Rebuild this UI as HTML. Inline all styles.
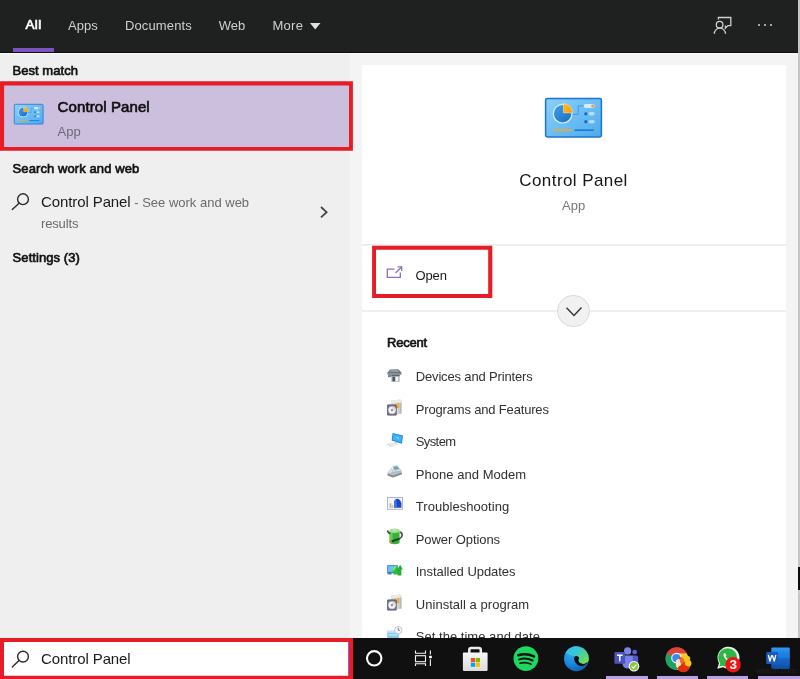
<!DOCTYPE html>
<html><head><meta charset="utf-8"><title>Search</title>
<style>
html,body{margin:0;padding:0;}
body{width:800px;height:679px;position:relative;overflow:hidden;background:#f4f4f4;font-family:"Liberation Sans",sans-serif;}
.a{position:absolute;}
.t{position:absolute;line-height:20px;white-space:pre;}
#w{position:absolute;left:0;top:0;width:800px;height:679px;will-change:transform;}
svg{position:absolute;overflow:visible;}
</style></head><body><div id="w">
<div class="a" style="left:0;top:52px;width:349.6px;height:587px;background:#efefef"></div>
<div class="a" style="left:362px;top:65px;width:424px;height:574px;background:#ffffff"></div>
<div class="a" style="left:797.5px;top:0;width:2.5px;height:639px;background:#c6c6c6"></div>
<div class="a" style="left:797.5px;top:567px;width:2.5px;height:23px;background:#0c0c0c"></div>
<div class="a" style="left:797.5px;top:590px;width:2.5px;height:4px;background:#c8c8e0"></div>
<div class="a" style="left:0;top:0;width:797.5px;height:52.7px;background:#1f2020"></div>
<div class="a" style="left:0;top:51.7px;width:797.5px;height:1px;background:#0e0e0e"></div>
<div class="a" style="left:0;top:52.7px;width:797.5px;height:1.3px;background:#fbfbfb"></div>
<div class="a" style="left:13px;top:48px;width:41.2px;height:4px;background:#7b53c1"></div>
<div class="a" style="left:362px;top:244px;width:424px;height:1.5px;background:#eeeeee"></div>
<div class="a" style="left:362px;top:310px;width:424px;height:1.6px;background:#efefef"></div>
<div class="t" style="left:25.50px;top:15.32px;font-size:13.5px;font-weight:normal;-webkit-text-stroke:0.65px #ffffff;color:#ffffff;letter-spacing:0.35px;">All</div>
<div class="t" style="left:68.00px;top:15.50px;font-size:13px;font-weight:normal;color:#cfcfcf;">Apps</div>
<div class="t" style="left:125.00px;top:15.50px;font-size:13px;font-weight:normal;color:#cfcfcf;letter-spacing:0.12px;">Documents</div>
<div class="t" style="left:218.75px;top:15.50px;font-size:13px;font-weight:normal;color:#cfcfcf;">Web</div>
<div class="t" style="left:272.50px;top:15.50px;font-size:13px;font-weight:normal;color:#cfcfcf;letter-spacing:0.25px;">More</div>
<svg style="left:310px;top:23px" width="11" height="7" viewBox="0 0 11 7"><path d="M0 0H10.5L5.25 6.5Z" fill="#e0e0e0"/></svg>
<svg style="left:712px;top:15px" width="22" height="21" viewBox="712 15 22 21" fill="none" stroke="#d0d0d0" stroke-width="1.3">
<circle cx="719.6" cy="24.7" r="3.3"/>
<path d="M714.3 33.8a5.6 5.6 0 0 1 11.2 0"/>
<path d="M718.4 19.5V17.5H730.8V25.6H728L725.4 28.2V25.6"/>
</svg>
<div class="a" style="left:757.7px;top:24.3px;width:2.2px;height:2.2px;background:#d4d4d4;border-radius:50%"></div>
<div class="a" style="left:764.0px;top:24.3px;width:2.2px;height:2.2px;background:#d4d4d4;border-radius:50%"></div>
<div class="a" style="left:770.3px;top:24.3px;width:2.2px;height:2.2px;background:#d4d4d4;border-radius:50%"></div>
<div class="t" style="left:12.60px;top:60.90px;font-size:13px;font-weight:normal;-webkit-text-stroke:0.65px #111;color:#111;letter-spacing:0.03px;">Best match</div>
<svg style="left:0;top:0" width="800" height="679" viewBox="0 0 800 679"><rect x="3.5999999999999996" y="85.0" width="345.9" height="62.400000000000006" fill="#cbbfdd"/><path fill-rule="evenodd" fill="#e61c26" d="M0 81.3H352.9V150.8H0ZM4.1 85.5V146.9H349V85.5Z"/></svg>
<div class="t" style="left:57.60px;top:96.90px;font-size:15px;font-weight:normal;-webkit-text-stroke:0.65px #101010;color:#101010;letter-spacing:0.1px;">Control Panel</div>
<div class="t" style="left:57.50px;top:121.90px;font-size:13px;font-weight:normal;color:#6c687a;">App</div>
<div class="t" style="left:12.60px;top:158.70px;font-size:13px;font-weight:normal;-webkit-text-stroke:0.65px #111;color:#111;letter-spacing:0.09px;">Search work and web</div>
<svg style="left:10px;top:192px" width="22" height="20" viewBox="10 192 22 20" fill="none" stroke="#2a2a2a" stroke-width="1.4" stroke-linecap="round">
<circle cx="23" cy="199.2" r="5.4"/><path d="M19 203.2L12.3 209.6"/></svg>
<div class="t" style="left:41.00px;top:192.00px;font-size:15px;font-weight:normal;color:#1a1a1a;letter-spacing:-0.1px;">Control Panel<span style="font-size:13px;color:#6b6b6b;letter-spacing:0"> - See work and web</span></div>
<div class="t" style="left:41.00px;top:214.00px;font-size:13px;font-weight:normal;color:#6b6b6b;letter-spacing:-0.15px;">results</div>
<svg style="left:319px;top:205px" width="10" height="14" viewBox="0 0 10 14" fill="none" stroke="#444" stroke-width="1.8"><path d="M2 2L7.6 7.2L2 12.4"/></svg>
<div class="t" style="left:12.60px;top:247.70px;font-size:13px;font-weight:normal;-webkit-text-stroke:0.65px #111;color:#111;letter-spacing:0.07px;">Settings (3)</div>
<div class="t" style="left:519.30px;top:170.61px;font-size:17px;font-weight:normal;color:#151515;letter-spacing:0.42px;">Control Panel</div>
<div class="t" style="left:562.00px;top:196.30px;font-size:13px;font-weight:normal;color:#767676;">App</div>
<svg style="left:0;top:0" width="800" height="679" viewBox="0 0 800 679"><path fill-rule="evenodd" fill="#e61c26" d="M372.1 245.8H492.3V298H372.1ZM376 249.7V293.9H488.2V249.7Z"/></svg>
<svg style="left:385px;top:264px" width="19" height="16" viewBox="385 264 19 16" fill="none" stroke="#8a6fc4" stroke-width="1.3">
<path d="M394.5 269.2H387.3V277.4H400.3V272.5"/><path d="M395.5 273L401.6 267"/><path d="M397.6 266.9H401.7V271"/></svg>
<div class="t" style="left:415.40px;top:265.50px;font-size:13px;font-weight:normal;color:#1a1a1a;letter-spacing:-0.1px;">Open</div>
<div class="a" style="left:557.3px;top:294.9px;width:32.5px;height:32.5px;box-sizing:border-box;border:1px solid #dadada;border-radius:50%;background:#f1f1f1"></div>
<svg style="left:564.8px;top:305.5px" width="18" height="11" viewBox="0 0 18 11" fill="none" stroke="#333" stroke-width="1.4"><path d="M1.5 1.8L9 9.4L16.5 1.6"/></svg>
<div class="t" style="left:387.10px;top:332.70px;font-size:13px;font-weight:normal;-webkit-text-stroke:0.65px #111;color:#111;letter-spacing:-0.25px;">Recent</div>
<div class="t" style="left:415.75px;top:367.35px;font-size:13px;font-weight:normal;color:#303030;letter-spacing:-0.16px;">Devices and Printers</div>
<div class="t" style="left:415.75px;top:399.85px;font-size:13px;font-weight:normal;color:#303030;letter-spacing:-0.17px;">Programs and Features</div>
<div class="t" style="left:415.75px;top:432.35px;font-size:13px;font-weight:normal;color:#303030;letter-spacing:-0.6px;">System</div>
<div class="t" style="left:415.75px;top:464.85px;font-size:13px;font-weight:normal;color:#303030;letter-spacing:0.04px;">Phone and Modem</div>
<div class="t" style="left:415.75px;top:497.35px;font-size:13px;font-weight:normal;color:#303030;letter-spacing:0.05px;">Troubleshooting</div>
<div class="t" style="left:415.75px;top:529.85px;font-size:13px;font-weight:normal;color:#303030;letter-spacing:-0.08px;">Power Options</div>
<div class="t" style="left:415.75px;top:562.35px;font-size:13px;font-weight:normal;color:#303030;letter-spacing:-0.04px;">Installed Updates</div>
<div class="t" style="left:415.75px;top:594.85px;font-size:13px;font-weight:normal;color:#303030;letter-spacing:0.04px;">Uninstall a program</div>
<div class="t" style="left:415.75px;top:627.35px;font-size:13px;font-weight:normal;color:#303030;letter-spacing:0.03px;">Set the time and date</div>
<svg width="0" height="0" style="position:absolute"><defs>
<linearGradient id="cpbg" x1="0" y1="0" x2="1" y2="1"><stop offset="0" stop-color="#8bd0fa"/><stop offset="1" stop-color="#4eabed"/></linearGradient>
<linearGradient id="cppie" x1="0" y1="0" x2="1" y2="1"><stop offset="0" stop-color="#3fa0e6"/><stop offset="1" stop-color="#1a6cc4"/></linearGradient>
<linearGradient id="cpor" x1="0" y1="0" x2="1" y2="1"><stop offset="0" stop-color="#ffc61a"/><stop offset="1" stop-color="#f7941d"/></linearGradient>
<radialGradient id="edg1" cx="0.3" cy="0.25" r="0.95"><stop offset="0" stop-color="#2fb0ee"/><stop offset="0.5" stop-color="#1a86dc"/><stop offset="1" stop-color="#0a4f9e"/></radialGradient>
<linearGradient id="edg2" x1="0" y1="0" x2="1" y2="0.7"><stop offset="0" stop-color="#35c0f2"/><stop offset="0.45" stop-color="#36c6d8"/><stop offset="0.8" stop-color="#56d87a"/><stop offset="1" stop-color="#74e052"/></linearGradient>
<linearGradient id="bag" x1="0" y1="0" x2="0" y2="1"><stop offset="0" stop-color="#f6f6f6"/><stop offset="1" stop-color="#dcdcdc"/></linearGradient>
<linearGradient id="wd" x1="0" y1="0" x2="0" y2="1"><stop offset="0" stop-color="#2b9af3"/><stop offset="0.5" stop-color="#1a6fd0"/><stop offset="1" stop-color="#0e4aa0"/></linearGradient>
</defs></svg>
<svg style="left:545.1px;top:98.3px" width="57" height="39.5" viewBox="0 0 57 39.5" preserveAspectRatio="none"><rect x="0.6" y="0.6" width="55.8" height="38.3" rx="1.6" fill="url(#cpbg)" stroke="#1b74cf" stroke-width="1.5"/>
<circle cx="17.6" cy="15.7" r="9.9" fill="#d9effd"/>
<circle cx="17.6" cy="15.7" r="8.7" fill="url(#cppie)"/>
<path d="M18.4 14.9V5.6A9.3 9.3 0 0 1 27.7 14.9Z" fill="url(#cpor)" stroke="#ffe9a8" stroke-width="0.5"/>
<path d="M27.6 16.4H33.2V7.9H38.7" fill="none" stroke="#2e86d8" stroke-width="0.7"/>
<rect x="38.7" y="5.9" width="11" height="4.1" rx="2.05" fill="#d4ecfc"/>
<circle cx="47.6" cy="7.95" r="1.5" fill="#f59a23"/>
<rect x="43.5" y="14" width="6.2" height="3.6" rx="1.8" fill="#b4def9"/>
<circle cx="40.8" cy="15.8" r="1.6" fill="#1768c2"/>
<rect x="43.5" y="21.9" width="6.2" height="3.6" rx="1.8" fill="#b4def9"/>
<circle cx="40.8" cy="23.7" r="1.6" fill="#1768c2"/>
<rect x="8.2" y="31.4" width="18.6" height="1.6" fill="#f7a823"/>
<rect x="29.6" y="31.4" width="19.2" height="1.6" fill="#1b78d3"/>
</svg>
<svg style="left:13.7px;top:103.6px;filter:blur(0.3px)" width="29.4" height="20.4" viewBox="0 0 57 39.5" preserveAspectRatio="none"><rect x="0.6" y="0.6" width="55.8" height="38.3" rx="1.6" fill="url(#cpbg)" stroke="#1b74cf" stroke-width="1.5"/>
<circle cx="17.6" cy="15.7" r="9.9" fill="#d9effd"/>
<circle cx="17.6" cy="15.7" r="8.7" fill="url(#cppie)"/>
<path d="M18.4 14.9V5.6A9.3 9.3 0 0 1 27.7 14.9Z" fill="url(#cpor)" stroke="#ffe9a8" stroke-width="0.5"/>
<path d="M27.6 16.4H33.2V7.9H38.7" fill="none" stroke="#2e86d8" stroke-width="0.7"/>
<rect x="38.7" y="5.9" width="11" height="4.1" rx="2.05" fill="#d4ecfc"/>
<circle cx="47.6" cy="7.95" r="1.5" fill="#f59a23"/>
<rect x="43.5" y="14" width="6.2" height="3.6" rx="1.8" fill="#b4def9"/>
<circle cx="40.8" cy="15.8" r="1.6" fill="#1768c2"/>
<rect x="43.5" y="21.9" width="6.2" height="3.6" rx="1.8" fill="#b4def9"/>
<circle cx="40.8" cy="23.7" r="1.6" fill="#1768c2"/>
<rect x="8.2" y="31.4" width="18.6" height="1.6" fill="#f7a823"/>
<rect x="29.6" y="31.4" width="19.2" height="1.6" fill="#1b78d3"/>
</svg>
<svg style="left:387.2px;top:368.9px;filter:blur(0.5px);" width="15" height="13" viewBox="0 0 15 13">
<path d="M3.2 0.6L11 0.3L14.3 3.2V5.6H0.6V3.4Z" fill="#68747c"/><path d="M4.2 1.3L10.3 1L12.3 2.8H2.6Z" fill="#9da8ae"/>
<rect x="0.6" y="4" width="13.7" height="1.7" fill="#87939a"/>
<rect x="1" y="5.6" width="3.4" height="2.6" fill="#7a868d"/>
<rect x="4.4" y="5.6" width="8.2" height="7.2" fill="#a9b3b9"/><rect x="4.4" y="5.6" width="8.2" height="1.5" fill="#5c676e"/>
<rect x="5.6" y="7.8" width="2.2" height="4.4" fill="#444e55"/><rect x="8.6" y="7.8" width="2.6" height="4.4" fill="#f2f4f5"/></svg>
<svg style="left:387.2px;top:398.6px;filter:blur(0.5px);" width="15" height="17" viewBox="0 0 15 17">
<path d="M4 1.6L13.3 0.4L14.5 1.4V14.6L9 15.8L4 14Z" fill="#d5d5d6"/><path d="M4 1.6L13.3 0.4L14.5 1.4V3.6L4 4.6Z" fill="#e9e9e6"/>
<path d="M8.6 4.4L12.2 4V9L8.6 9.6Z" fill="#e9a93a"/><path d="M8.6 4.4L10.4 4.2V6.4L8.6 6.8Z" fill="#f3d262"/>
<path d="M12.6 3.8L14.5 3.4V14.6L12.6 15Z" fill="#b9b9bd"/>
<rect x="0.2" y="5.6" width="9.4" height="10.8" rx="1" fill="#4e4a66"/><rect x="1.3" y="6.5" width="7.4" height="9" fill="#8f8ca3"/>
<circle cx="5" cy="11.1" r="3.7" fill="#f3f3f5"/><circle cx="5" cy="11.1" r="1.2" fill="#8a879c"/><path d="M5 7.4A3.7 3.7 0 0 1 8.7 11.1H6.2A1.2 1.2 0 0 0 5 9.9Z" fill="#d9dbe6"/></svg>
<svg style="left:387.2px;top:432px;filter:blur(0.5px);" width="17" height="16" viewBox="0 0 17 16">
<path d="M5.6 0.9L16 3.6L15 11.8L4.6 8.6Z" fill="#1a86dc"/><path d="M6.4 2L15 4.3L14.2 10.5L5.6 7.8Z" fill="#3fb2f5"/><path d="M9 4.8L12.2 7.8L11 5.3Z" fill="#c8eafc"/>
<path d="M8 9.6L10.4 10.4L9.9 11.8L7.5 11.2Z" fill="#c3c9ce"/><path d="M0.2 11.6L7.4 10.6L11.8 12.6L4.4 14.8Z" fill="#e6e9eb"/><path d="M0.2 11.6L4.4 14.8V15.3L0.2 12.2Z" fill="#b9c0c6"/></svg>
<svg style="left:387.2px;top:465.3px;filter:blur(0.5px);" width="15" height="13" viewBox="0 0 15 13">
<path d="M5.2 1L10.6 0.3L14.2 4.8L6.4 6.4Z" fill="#c9dde8"/><path d="M6.3 1.7L10.2 1.2L12.2 4L7.4 5Z" fill="#6fa0bd"/>
<path d="M0.6 7.6L4.8 2.6L6.4 6.6L14.4 5L14.8 9.2L6 12.6L0.6 10.4Z" fill="#b5bec5"/><path d="M0.6 8.6L6 10.6L14.8 7.6V9.2L6 12.6L0.6 10.4Z" fill="#858f97"/><path d="M1 7.4L4.6 3.2L5.8 6.2L3 8.4Z" fill="#dde2e6"/></svg>
<svg style="left:386.8px;top:497.1px;filter:blur(0.5px);" width="16" height="13" viewBox="0 0 16 13">
<rect x="0.4" y="0.4" width="15.2" height="11.9" fill="#f4f5f8" stroke="#a4aab8" stroke-width="0.8"/>
<rect x="2.6" y="6.2" width="1.8" height="4.6" fill="#b3b6ba"/><rect x="4.6" y="8" width="1.8" height="2.8" fill="#d9c99c"/>
<path d="M7 10.8V6C7 3.4 8.4 1.8 10.2 1.8C12 1.8 13.2 3 14.4 6V10.8Z" fill="#1f45c6"/><path d="M7 10.8V6.4C7 4.4 8 3 9.2 2.6L10.2 10.8Z" fill="#3f76e2"/></svg>
<svg style="left:386.8px;top:528.2px;filter:blur(0.5px);" width="16" height="17" viewBox="0 0 16 17">
<path d="M2.6 2.8V14A5 2.2 0 0 0 12.6 14V2.8Z" fill="#33b233"/><path d="M2.6 2.8V14A5 2.2 0 0 0 5.6 15.8V4.6Z" fill="#62d052"/>
<ellipse cx="7.6" cy="2.8" rx="5" ry="2.2" fill="#9fe38c"/><ellipse cx="7.6" cy="2" rx="2.2" ry="1" fill="#cfd6d2"/>
<path d="M0.5 2.4C0.8 4.4 2 5.4 3.6 5.6" stroke="#3c403e" stroke-width="1.4" fill="none"/>
<path d="M13 4C16 5 15.8 9 13 10.4" stroke="#454a48" stroke-width="1.6" fill="none"/>
<path d="M4 12.6L12.6 9.8L13.4 11.2L5 14.6Z" fill="#2f3331"/><path d="M2 13.6L4.4 12.4L5.2 14.4L3 15.2Z" fill="#d9823a"/></svg>
<svg style="left:387.2px;top:563.8px;filter:blur(0.5px);" width="16" height="12" viewBox="0 0 16 12">
<rect x="0.2" y="1.2" width="10.6" height="8" fill="#2c7ed4"/><rect x="1.1" y="2.1" width="8.8" height="5.8" fill="#6fc2f3"/><rect x="0.6" y="9.2" width="4" height="1.2" fill="#3e5f8c"/>
<path d="M4.4 6.6L8.2 1.2L11 5V10.4H6.4V7.6Z" fill="#2ebd3a"/><path d="M9.6 6.2L13.2 0.8L15.8 5.6H14.4V11.4H10.6V7.4Z" fill="#27b034"/><path d="M8.2 1.2L9.4 3L7 6.6H4.4Z" fill="#7fe57c"/></svg>
<svg style="left:387.2px;top:593.6px;filter:blur(0.5px);" width="15" height="17" viewBox="0 0 15 17">
<path d="M4 1.6L13.3 0.4L14.5 1.4V14.6L9 15.8L4 14Z" fill="#d5d5d6"/><path d="M4 1.6L13.3 0.4L14.5 1.4V3.6L4 4.6Z" fill="#e9e9e6"/>
<path d="M8.6 4.4L12.2 4V9L8.6 9.6Z" fill="#e9a93a"/><path d="M8.6 4.4L10.4 4.2V6.4L8.6 6.8Z" fill="#f3d262"/>
<path d="M12.6 3.8L14.5 3.4V14.6L12.6 15Z" fill="#b9b9bd"/>
<rect x="0.2" y="5.6" width="9.4" height="10.8" rx="1" fill="#4e4a66"/><rect x="1.3" y="6.5" width="7.4" height="9" fill="#8f8ca3"/>
<circle cx="5" cy="11.1" r="3.7" fill="#f3f3f5"/><circle cx="5" cy="11.1" r="1.2" fill="#8a879c"/><path d="M5 7.4A3.7 3.7 0 0 1 8.7 11.1H6.2A1.2 1.2 0 0 0 5 9.9Z" fill="#d9dbe6"/></svg>
<svg style="left:387.2px;top:625.6px;filter:blur(0.5px);" width="16" height="16" viewBox="0 0 16 16">
<rect x="0.2" y="4.8" width="11.6" height="10" fill="#86cbee"/><rect x="0.2" y="4.8" width="11.6" height="2" fill="#bfe5f7"/><rect x="1.4" y="8.4" width="9" height="1" fill="#d6effb"/>
<circle cx="11.3" cy="4.2" r="3.7" fill="#f4f6f9" stroke="#b3c2d2" stroke-width="0.9"/><path d="M11.3 1.9V4.4H12.9" stroke="#5a6a7a" stroke-width="0.8" fill="none"/></svg>
<div class="a" style="left:0;top:638.3px;width:800px;height:40.7px;background:#101010"></div>
<svg style="left:0;top:0" width="800" height="679" viewBox="0 0 800 679"><rect x="3.5" y="641.4" width="345.1" height="34.89999999999998" fill="#ffffff"/><path fill-rule="evenodd" fill="#e61c26" d="M0 637.9H353.1V679H0ZM4 641.9V675.8H348.1V641.9Z"/></svg>
<div class="a" style="left:347.6px;top:641.9px;width:1.2px;height:34px;background:#8f62c4"></div>
<svg style="left:10px;top:649px" width="22" height="20" viewBox="10 649 22 20" fill="none" stroke="#2a2a2a" stroke-width="1.4" stroke-linecap="round">
<circle cx="23" cy="656.6" r="5.4"/><path d="M19 660.6L12.3 667"/></svg>
<div class="t" style="left:41.00px;top:648.90px;font-size:15px;font-weight:normal;color:#1a1a1a;letter-spacing:-0.1px;">Control Panel</div>
<svg style="left:364px;top:648px" width="20" height="20" viewBox="364 648 20 20"><circle cx="374.2" cy="658.3" r="7.2" fill="none" stroke="#fff" stroke-width="2.1"/></svg>
<svg style="left:413px;top:649px" width="21" height="19" viewBox="413 649 21 19" fill="none" stroke="#f2f2f2" stroke-width="1.1">
<path d="M415.5 650.5V653.3H425.5V650.5"/><rect x="415.5" y="655.7" width="10" height="6"/><path d="M415.5 666V663.7H425.5V666"/>
<path d="M430.4 650.5V654.6M430.4 659.2V666"/><rect x="429.1" y="655.8" width="2.7" height="2.4" fill="#fff" stroke="none"/></svg>
<svg style="left:461px;top:645px" width="29" height="28" viewBox="461 645 29 28">
<path d="M469.3 653V650A2 2 0 0 1 471.3 648H478.8A2 2 0 0 1 480.8 650V653" fill="none" stroke="#ececec" stroke-width="2.5"/>
<rect x="462.9" y="652.6" width="24.7" height="18.3" rx="0.8" fill="url(#bag)"/>
<rect x="470.8" y="658" width="4.3" height="4.1" fill="#f25022"/><rect x="475.7" y="658" width="4.3" height="4.1" fill="#7fba00"/>
<rect x="470.8" y="662.7" width="4.3" height="4.1" fill="#00a4ef"/><rect x="475.7" y="662.7" width="4.3" height="4.1" fill="#ffb900"/></svg>
<svg style="left:513px;top:646px" width="26" height="26" viewBox="513 646 26 26">
<circle cx="525.9" cy="658.6" r="12.4" fill="#1ed760"/>
<g fill="none" stroke="#111" stroke-linecap="round"><path d="M518.3 655.2Q526 652.6 534 656.4" stroke-width="2.5"/><path d="M519.2 659.4Q526 657.4 532.6 660.5" stroke-width="2"/><path d="M520 663.2Q525.8 661.7 531.2 664.2" stroke-width="1.6"/></g></svg>
<svg style="left:563px;top:646px;filter:blur(0.35px)" width="27" height="26" viewBox="563 646 27 26">
<circle cx="576.4" cy="658.75" r="12.4" fill="url(#edg1)"/>
<path d="M565.3 653.2A12.4 12.4 0 0 1 588.8 658.75C588.8 663.5 584.5 664.8 581.3 663.6C579 662.7 578 660.5 578.6 658.7C579.1 657 577.5 655.8 575.5 656C571 656.4 569.5 653 565.3 653.2Z" fill="url(#edg2)"/>
<path d="M574.2 659.8C573.5 657.2 575.3 655.6 577.2 656.2C579.3 656.8 579.2 658.4 578.6 659.6C577.9 661.2 579.5 663.6 582.5 663.9C585 664.1 587.3 662.5 587.8 661.8C586.5 664.5 583.8 666.3 581 666C577.5 665.7 574.9 662.8 574.2 659.8Z" fill="#0a0f14"/></svg>
<svg style="left:612px;top:646px;filter:blur(0.3px)" width="30" height="28" viewBox="612 646 30 28">
<circle cx="634.7" cy="652.1" r="2.4" fill="#5b62d6"/><rect x="631" y="655.6" width="7.2" height="9.6" rx="2" fill="#5059c9"/>
<circle cx="627.6" cy="650.9" r="3.6" fill="#7b83eb"/><path d="M622.5 655.6H632.8V664A5.2 5.2 0 0 1 622.5 664Z" fill="#7b83eb"/>
<rect x="614.4" y="652" width="10.8" height="11.8" rx="1" fill="#4b53bc"/>
<path d="M617 655.2H622.6M619.8 655.2V661.2" stroke="#fff" stroke-width="1.5" fill="none"/>
<circle cx="634" cy="666.2" r="5.3" fill="#fff"/><circle cx="634" cy="666.2" r="4.3" fill="#8cc63f"/><path d="M631.7 666.3L633.4 668L636.3 664.6" stroke="#fff" stroke-width="1.2" fill="none"/></svg>
<svg style="left:664px;top:646px;filter:blur(0.35px)" width="30" height="28" viewBox="664 646 30 28">
<circle cx="676.8" cy="658.4" r="11.2" fill="#db4437"/>
<path d="M676.8 658.8L667 653.2A11.3 11.3 0 0 0 676.8 670.1L681.7 661.6Z" fill="#1da462"/>
<path d="M676.8 658.8L681.7 661.6L676.8 670.1A11.3 11.3 0 0 0 686.6 653.2H676.8Z" fill="#ffcd40"/>
<path d="M667 653.2A11.3 11.3 0 0 1 686.6 653.2H676.8Z" fill="#db4437"/>
<circle cx="676.4" cy="658" r="5.2" fill="#f1f1f1"/><circle cx="676.4" cy="658" r="4.1" fill="#4285f4"/>
<circle cx="683.3" cy="664.2" r="7.5" fill="#e23c14"/>
<ellipse cx="685.6" cy="658.6" rx="4.6" ry="3.2" fill="#f9c31c"/>
<ellipse cx="678.4" cy="663.6" rx="2.6" ry="4.6" fill="#fbe6c8"/>
<ellipse cx="682" cy="660.8" rx="2" ry="3" fill="#ea6a2c"/>
<circle cx="688.2" cy="663.2" r="3.2" fill="#fdc41a"/>
<ellipse cx="683.2" cy="668.6" rx="5.4" ry="3.6" fill="#e02e10"/></svg>
<svg style="left:715px;top:645px" width="28" height="29" viewBox="715 645 28 29">
<path d="M717.2 668.8L719 663.2A11 11 0 1 1 723 667.2Z" fill="#e9f2ea"/>
<circle cx="727.6" cy="657.7" r="9.4" fill="#2cb742"/><path d="M719.3 666.6L720.6 662.6L723.4 665.5Z" fill="#2cb742"/>
<path d="M723.8 653.2C723 654.5 723.6 657 725.8 659.3C728 661.6 730.6 662.5 731.9 661.6L732.3 660.2L730.1 659L729.1 659.9C728 659.5 726.2 657.8 725.6 656.5L726.4 655.5L725.3 653.2Z" fill="#fff"/>
<circle cx="733.1" cy="664.7" r="7.7" fill="#f01414"/></svg>
<div class="t" style="left:729.5px;top:655.9px;font-size:13.5px;font-weight:bold;color:#fff;line-height:17px">3</div>
<svg style="left:765px;top:646px;filter:blur(0.3px)" width="27" height="25" viewBox="765 646 27 25">
<rect x="771.3" y="647.5" width="18.5" height="21.5" rx="1.2" fill="url(#wd)"/>
<rect x="771.3" y="652.9" width="18.5" height="5.4" fill="#1f7fe0" opacity="0.55"/><rect x="771.3" y="658.3" width="18.5" height="5.3" fill="#1660c0" opacity="0.6"/>
<rect x="766.2" y="652" width="11.8" height="12" rx="1" fill="#175bbf"/>
<path d="M768.4 655L769.9 661.2L771.7 655.6H772.5L774.3 661.2L775.8 655" fill="none" stroke="#fff" stroke-width="1.3" stroke-linejoin="round"/></svg>
<div class="a" style="left:606.3px;top:676.3px;width:41.7px;height:2.7px;background:#b9a1e6"></div>
<div class="a" style="left:657px;top:676.3px;width:41.0px;height:2.7px;background:#b9a1e6"></div>
<div class="a" style="left:707.3px;top:676.3px;width:41.2px;height:2.7px;background:#b9a1e6"></div>
<div class="a" style="left:757.8px;top:676.3px;width:42.2px;height:2.7px;background:#b9a1e6"></div>
<div class="t" style="left:756px;top:665px;font-size:8px;color:#232323;line-height:12px">wsxdn.com</div>
</div></body></html>
